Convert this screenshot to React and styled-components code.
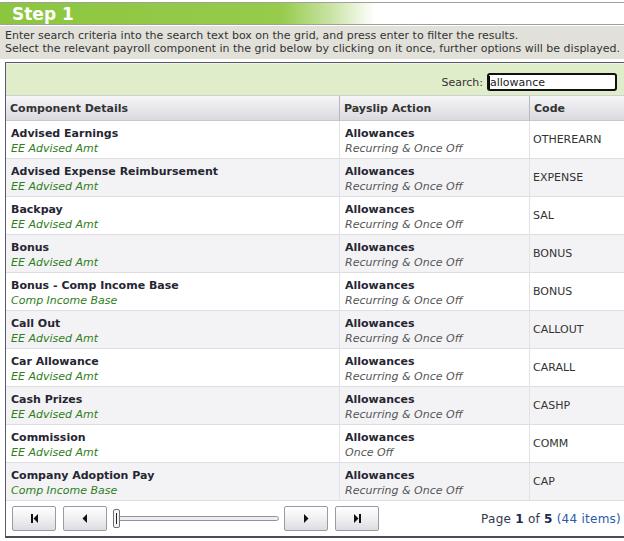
import React from 'react';
import styled, { createGlobalStyle } from 'styled-components';

const GlobalStyle = createGlobalStyle`
  html, body {
    margin: 0;
    padding: 0;
    background: #ffffff;
    overflow: hidden;
  }
  body {
    font-family: "DejaVu Sans", Verdana, sans-serif;
    font-size: 11px;
    color: #333;
  }
`;

const rows = [
  { name: 'Advised Earnings', sub: 'EE Advised Amt', freq: 'Recurring & Once Off', code: 'OTHEREARN' },
  { name: 'Advised Expense Reimbursement', sub: 'EE Advised Amt', freq: 'Recurring & Once Off', code: 'EXPENSE' },
  { name: 'Backpay', sub: 'EE Advised Amt', freq: 'Recurring & Once Off', code: 'SAL' },
  { name: 'Bonus', sub: 'EE Advised Amt', freq: 'Recurring & Once Off', code: 'BONUS' },
  { name: 'Bonus - Comp Income Base', sub: 'Comp Income Base', freq: 'Recurring & Once Off', code: 'BONUS' },
  { name: 'Call Out', sub: 'EE Advised Amt', freq: 'Recurring & Once Off', code: 'CALLOUT' },
  { name: 'Car Allowance', sub: 'EE Advised Amt', freq: 'Recurring & Once Off', code: 'CARALL' },
  { name: 'Cash Prizes', sub: 'EE Advised Amt', freq: 'Recurring & Once Off', code: 'CASHP' },
  { name: 'Commission', sub: 'EE Advised Amt', freq: 'Once Off', code: 'COMM' },
  { name: 'Company Adoption Pay', sub: 'Comp Income Base', freq: 'Recurring & Once Off', code: 'CAP' },
];

const Page = styled.div`
  padding-top: 2px;
`;

const StepBar = styled.div`
  height: 21px;
  border-top: 1px solid #a0a0a0;
  border-bottom: 1px solid #a0a0a0;
  background: linear-gradient(to right, #8cc63e 0%, #96cb4c 45%, #c9e3a2 53%, #ffffff 60%);
  display: flex;
  align-items: center;
  padding-left: 12px;
  color: #fff;
  font-weight: bold;
  font-size: 17px;
`;

const Instructions = styled.div`
  margin-top: 1px;
  background: #e1e1da;
  padding: 3px 0 4px 5px;
  line-height: 13px;
  white-space: nowrap;
  color: #333;
`;

const Grid = styled.div`
  margin: 3px -4px 0 5px;
  border: 1px solid #5a5a6a;
  border-right: none;
  border-bottom: 2px solid #4a4a5a;
`;

const SearchBar = styled.div`
  box-sizing: border-box;
  height: 33px;
  background: #dfedca;
  border-top: 1px solid #eef5e2;
  border-bottom: 1px solid #d0d0d0;
  display: flex;
  align-items: flex-end;
  justify-content: flex-end;
  padding: 0 11px 4px 0;
  gap: 4px;
  color: #333;
  line-height: 17px;
`;

const SearchInput = styled.div`
  width: 126px;
  height: 14px;
  border: 2px solid #111;
  border-radius: 3px;
  background: #fff;
  display: flex;
  align-items: center;
  color: #222;
`;

const Caret = styled.span`
  width: 1px;
  height: 13px;
  background: #000;
`;

const Table = styled.div`
  display: grid;
  grid-template-columns: 333px 190px 1fr;
`;

const HeadCell = styled.div`
  height: 24px;
  background: linear-gradient(to bottom, #f6f6f8 0%, #e8e8ec 50%, #d9d9df 100%);
  border-bottom: 1px solid #c8c8cc;
  border-left: ${p => (p.$first ? 'none' : '1px solid #b8b8c0')};
  display: flex;
  align-items: center;
  padding-left: 4px;
  font-weight: bold;
  color: #333;
`;

const Cell = styled.div`
  box-sizing: border-box;
  height: 38px;
  background: ${p => (p.$alt ? '#f3f3f5' : '#ffffff')};
  border-bottom: 1px solid #dedee2;
  border-left: ${p => (p.$first ? 'none' : '1px solid #e2e2e6')};
  padding: ${p => (p.$center ? '0 0 0 3px' : '5px 0 0 5px')};
  display: flex;
  flex-direction: column;
  justify-content: ${p => (p.$center ? 'center' : 'flex-start')};
`;

const Title = styled.div`
  font-weight: bold;
  color: #262633;
  line-height: 15px;
`;

const Sub = styled.div`
  font-style: italic;
  color: ${p => (p.$green ? '#2f7d22' : '#555')};
  line-height: 15px;
`;

const CodeText = styled.div`
  color: #333;
`;

const Pager = styled.div`
  height: 35px;
  display: flex;
  align-items: center;
  padding-left: 6px;
  padding-right: 7px;
`;

const PagerButton = styled.div`
  box-sizing: border-box;
  width: 44px;
  height: 25px;
  border: 1px solid #9a9aa6;
  border-radius: 2px;
  background: linear-gradient(to bottom, #ffffff 0%, #f0f0f3 50%, #dcdce2 100%);
  display: flex;
  align-items: center;
  justify-content: center;
  margin-right: ${p => p.$gap}px;
`;

const Slider = styled.div`
  position: relative;
  width: 166px;
  height: 22px;
  margin-right: 5px;
  display: flex;
  align-items: center;
`;

const Track = styled.div`
  flex: 1;
  height: 3px;
  margin-left: 3px;
  border: 1px solid #9090a0;
  border-radius: 3px;
  background: #eeeef2;
`;

const Thumb = styled.div`
  position: absolute;
  left: 0;
  top: 1px;
  width: 5px;
  height: 17px;
  border: 1px solid #70707a;
  border-radius: 2px;
  background: #f4f4f6;
  display: flex;
  justify-content: center;
  &::after {
    content: '';
    width: 1px;
    height: 11px;
    margin-top: 3px;
    background: #222;
  }
`;

const PageInfo = styled.div`
  margin-left: auto;
  font-size: 12px;
  letter-spacing: 0.25px;
  color: #2a5ca8;
  b {
    color: #1a2a50;
  }
  span {
    color: #33394a;
  }
`;

const Icon = ({ kind }) => {
  const shape = {
    first: <><rect x="2" y="2" width="2" height="9" /><path d="M9 2 L4.5 6.5 L9 11 Z" /></>,
    prev: <path d="M7 2 L2.5 6.5 L7 11 Z" />,
    next: <path d="M3 2 L7.5 6.5 L3 11 Z" />,
    last: <><path d="M2 2 L6.5 6.5 L2 11 Z" /><rect x="7" y="2" width="2" height="9" /></>,
  }[kind];
  return (
    <svg width="11" height="13" viewBox="0 0 11 13" fill="#111">
      {shape}
    </svg>
  );
};

export default function App() {
  return (
    <Page>
      <GlobalStyle />
      <StepBar>Step 1</StepBar>
      <Instructions>
        Enter search criteria into the search text box on the grid, and press enter to filter the results.
        <br />
        Select the relevant payroll component in the grid below by clicking on it once, further options will be displayed.
      </Instructions>
      <Grid>
        <SearchBar>
          Search:
          <SearchInput>
            <Caret />
            allowance
          </SearchInput>
        </SearchBar>
        <Table>
          <HeadCell $first>Component Details</HeadCell>
          <HeadCell>Payslip Action</HeadCell>
          <HeadCell>Code</HeadCell>
          {rows.map((r, i) => (
            <React.Fragment key={i}>
              <Cell $first $alt={i % 2 === 1}>
                <Title>{r.name}</Title>
                <Sub $green>{r.sub}</Sub>
              </Cell>
              <Cell $alt={i % 2 === 1}>
                <Title>Allowances</Title>
                <Sub>{r.freq}</Sub>
              </Cell>
              <Cell $alt={i % 2 === 1} $center>
                <CodeText>{r.code}</CodeText>
              </Cell>
            </React.Fragment>
          ))}
        </Table>
        <Pager>
          <PagerButton $gap={7}><Icon kind="first" /></PagerButton>
          <PagerButton $gap={6}><Icon kind="prev" /></PagerButton>
          <Slider>
            <Track />
            <Thumb />
          </Slider>
          <PagerButton $gap={7}><Icon kind="next" /></PagerButton>
          <PagerButton $gap={0}><Icon kind="last" /></PagerButton>
          <PageInfo>
            <span>Page </span><b>1</b><span> of </span><b>5</b> (44 items)
          </PageInfo>
        </Pager>
      </Grid>
    </Page>
  );
}
